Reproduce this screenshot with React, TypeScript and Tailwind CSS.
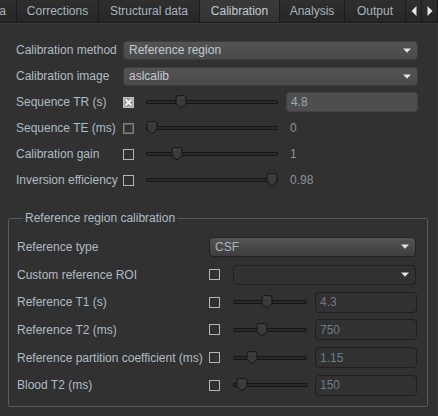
import React from "react";

const FONT = { fontFamily: '"Liberation Sans", Arial, sans-serif' };

function Arrow() {
  return (
    <svg width="8" height="5" viewBox="0 0 8 5" className="shrink-0">
      <path d="M0 0.5 H8 L4 4.8 Z" fill="#e4e4e4" />
    </svg>
  );
}

function Combo({ text, w, dark }: { text?: string; w: number; dark?: boolean }) {
  return (
    <div
      className={
        "flex items-center justify-between rounded-[4px] border pl-[5px] pr-[6px] " +
        (dark
          ? "h-[20px] border-[#202020] bg-[#313131]"
          : "h-[19px] border-[#3e3e3e] bg-gradient-to-b from-[#535353] to-[#4a4a4a]")
      }
      style={{ width: w }}
    >
      <span className="text-[12px] leading-none text-[#c3cad2]">{text}</span>
      <Arrow />
    </div>
  );
}

function Check({ kind }: { kind?: "x" | "focus" }) {
  if (kind === "x") {
    return (
      <svg width="11" height="11" viewBox="0 0 11 11" className="shrink-0">
        <rect x="0.5" y="0.5" width="10" height="10" fill="#8d8d8d" stroke="#bdbdbd" />
        <path d="M2.5 2.5 L8.5 8.5 M8.5 2.5 L2.5 8.5" stroke="#f0f0f0" strokeWidth="2" />
        <rect x="1" y="1" width="9" height="9" fill="none" stroke="#d8d8d8" strokeWidth="1" strokeDasharray="1 1" />
      </svg>
    );
  }
  if (kind === "focus") {
    return (
      <svg width="11" height="11" viewBox="0 0 11 11" className="shrink-0">
        <rect x="0.5" y="0.5" width="10" height="10" fill="none" stroke="#d0d0d0" strokeDasharray="1 1" />
        <rect x="1.5" y="1.5" width="8" height="8" fill="none" stroke="#8a8a8a" strokeDasharray="1 1" />
      </svg>
    );
  }
  return <div className="h-[11px] w-[11px] shrink-0 border border-[#b4b4b4]" />;
}

function Slider({ w, pos }: { w: number; pos: number }) {
  return (
    <div className="relative flex h-[14px] shrink-0 items-center" style={{ width: w }}>
      <div className="h-[4px] w-full rounded-[1px] border border-[#151515] bg-[#2b2b2b]" />
      <svg
        width="12"
        height="14"
        viewBox="0 0 12 14"
        className="absolute top-0"
        style={{ left: pos - 6 }}
      >
        <path
          d="M1 3 Q1 0.5 3.5 0.5 H8.5 Q11 0.5 11 3 V8.5 L6 13 L1 8.5 Z"
          fill="#3a3a3a"
          stroke="#151515"
        />
        <path d="M4 2.5 V3.5 M8 2.5 V3.5" stroke="#5c5c5c" strokeWidth="1" />
      </svg>
    </div>
  );
}

function TopRow({ label, children }: { label: string; children: React.ReactNode }) {
  return (
    <div className="flex h-[26px] items-center">
      <div className="w-[107px] shrink-0 whitespace-nowrap text-[12px] text-[#b0bbc6]">{label}</div>
      {children}
    </div>
  );
}

function RefRow({ label, children }: { label: string; children: React.ReactNode }) {
  return (
    <div className="flex h-[27.7px] items-center">
      <div className="w-[192px] shrink-0 whitespace-nowrap text-[12px] text-[#b0bbc6]">{label}</div>
      {children}
    </div>
  );
}

function Tab({ label, w, active }: { label: string; w: number; active?: boolean }) {
  return (
    <div
      className={
        "flex h-[22px] shrink-0 items-center justify-center border-r border-[#1b1b1b] text-[12px] " +
        (active
          ? "bg-gradient-to-b from-[#3a3a3a] to-[#343434] text-[#c2cad3]"
          : "bg-gradient-to-b from-[#2f2f2f] to-[#262626] text-[#a9b4bf]")
      }
      style={{ width: w }}
    >
      {label}
    </div>
  );
}

function ScrollBtn({ dir }: { dir: "l" | "r" }) {
  return (
    <div className="flex h-[22px] w-[16px] shrink-0 items-center justify-center border-r border-[#1b1b1b] bg-gradient-to-b from-[#2f2f2f] to-[#262626]">
      <svg width="6" height="10" viewBox="0 0 6 10">
        {dir === "l" ? (
          <path d="M5.5 0 V10 L0.5 5 Z" fill="#e6e6e6" />
        ) : (
          <path d="M0.5 0 V10 L5.5 5 Z" fill="#e6e6e6" />
        )}
      </svg>
    </div>
  );
}

export default function App() {
  return (
    <div className="h-[416px] w-[438px] overflow-hidden bg-[#313131]" style={FONT}>
      {/* Tab bar */}
      <div className="flex h-[23px] border-b border-[#1c1c1c] bg-[#2a2a2a]">
        <div className="flex h-[22px] w-[17px] shrink-0 items-center justify-end border-r border-[#1b1b1b] bg-gradient-to-b from-[#2f2f2f] to-[#262626] pr-[10px] text-[12px] text-[#a9b4bf]">
          <span className="whitespace-nowrap">a</span>
        </div>
        <Tab label="Corrections" w={82} />
        <Tab label="Structural data" w={101} />
        <Tab label="Calibration" w={80} active />
        <Tab label="Analysis" w={65} />
        <Tab label="Output" w={61} />
        <ScrollBtn dir="l" />
        <ScrollBtn dir="r" />
      </div>

      <div className="h-[393px] border-r border-t border-[#393939] border-t-[#3a3a3a]">
        {/* Top section */}
        <div className="flex flex-col pl-[16px] pt-[13px]">
          <TopRow label="Calibration method">
            <Combo text="Reference region" w={295} />
          </TopRow>
          <TopRow label="Calibration image">
            <Combo text="aslcalib" w={295} />
          </TopRow>
          <TopRow label="Sequence TR (s)">
            <Check kind="x" />
            <div className="w-[12px]" />
            <Slider w={132} pos={35} />
            <div className="w-[8px]" />
            <div className="flex h-[20px] w-[132px] items-center rounded-[4px] border border-[#434343] bg-[#4e4e4e] pl-[4px] text-[12px] text-[#9aabbd]">
              4.8
            </div>
          </TopRow>
          <TopRow label="Sequence TE (ms)">
            <Check kind="focus" />
            <div className="w-[12px]" />
            <Slider w={132} pos={6} />
            <div className="w-[8px]" />
            <div className="pl-[4px] text-[12px] text-[#8e9299]">0</div>
          </TopRow>
          <TopRow label="Calibration gain">
            <Check />
            <div className="w-[12px]" />
            <Slider w={132} pos={31} />
            <div className="w-[8px]" />
            <div className="pl-[4px] text-[12px] text-[#8e9299]">1</div>
          </TopRow>
          <TopRow label="Inversion efficiency">
            <Check />
            <div className="w-[12px]" />
            <Slider w={132} pos={126} />
            <div className="w-[8px]" />
            <div className="pl-[4px] text-[12px] text-[#8e9299]">0.98</div>
          </TopRow>
        </div>

        {/* Group box */}
        <fieldset className="ml-[8px] mt-[18px] w-[420px] rounded-[2px] border border-[#5a5a5a] pb-[7px] pl-[8px] pr-[10px] pt-[8px]">
          <legend className="ml-[6px] px-[2px] text-[12px] leading-[14px] text-[#b0bbc6]">
            Reference region calibration
          </legend>
          <RefRow label="Reference type">
            <div className="flex h-[20px] w-[207px] items-center justify-between rounded-[4px] border border-[#222222] bg-gradient-to-b from-[#535353] to-[#3e3e3e] pl-[5px] pr-[6px]">
              <span className="text-[12px] leading-none text-[#a8b6c6]">CSF</span>
              <Arrow />
            </div>
          </RefRow>
          <RefRow label="Custom reference ROI">
            <Check />
            <div className="w-[13px]" />
            <Combo w={183} dark />
          </RefRow>
          {[
            { l: "Reference T1 (s)", p: 34, v: "4.3" },
            { l: "Reference T2 (ms)", p: 29, v: "750" },
            { l: "Reference partition coefficient (ms)", p: 19, v: "1.15" },
            { l: "Blood T2 (ms)", p: 9, v: "150" },
          ].map((r) => (
            <RefRow key={r.l} label={r.l}>
              <Check />
              <div className="w-[13px]" />
              <Slider w={74} pos={r.p} />
              <div className="w-[8px]" />
              <div className="flex h-[21px] w-[102px] items-center rounded-[4px] border border-[#1f1f1f] pl-[4px] text-[12px] text-[#6f7c8a]">
                {r.v}
              </div>
            </RefRow>
          ))}
        </fieldset>
      </div>
    </div>
  );
}
